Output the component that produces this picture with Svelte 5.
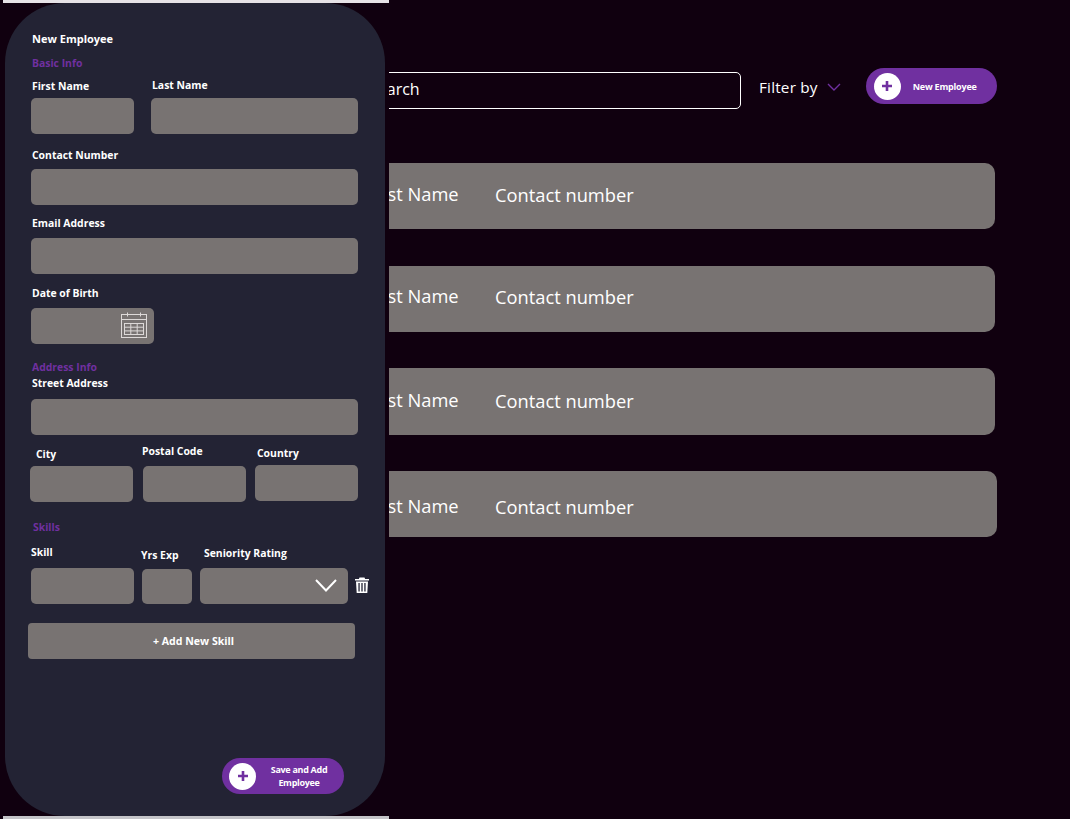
<script lang="ts">
	// top/bottom pad nudges the text inside each row
	const rows = [
		{ top: 59, height: 66, padTop: 0, padBottom: 4 },
		{ top: 37, height: 66, padTop: 0, padBottom: 6 },
		{ top: 36, height: 67, padTop: 0, padBottom: 2 },
		{ top: 36, height: 66, padTop: 4, padBottom: 0 }
	];
</script>

{#snippet plusIcon()}
	<span class="plus-disc">
		<svg viewBox="0 0 12 12" width="12" height="12" aria-hidden="true">
			<path d="M6 1v10M1 6h10" stroke="#7030a0" stroke-width="2.6" />
		</svg>
	</span>
{/snippet}

<div class="page">
	<main class="main">
		<div class="toolbar">
			<input class="search" placeholder="Search" />
			<span class="filter">Filter by</span>
			<svg class="filter-chevron" viewBox="0 0 14 8" width="14" height="8" aria-hidden="true">
				<path d="M1 1l6 6 6-6" fill="none" stroke="#7030a0" stroke-width="1.4" />
			</svg>
			<button class="pill new-btn">
				{@render plusIcon()}
				<span class="new-text">New Employee</span>
			</button>
		</div>

		{#each rows as row, i}
			<div
				class="row"
				class:row-last={i === 3}
				style="margin-top: {row.top}px; height: {row.height}px; padding-top: {row.padTop}px; padding-bottom: {row.padBottom}px"
			>
				<span class="cell-name">First Name</span>
				<span class="cell-contact">Contact number</span>
			</div>
		{/each}
	</main>

	<div class="overlay">
		<form class="panel">
			<h1 class="title">New Employee</h1>
			<h2 class="section">Basic Info</h2>
			<div class="fields basic">
				<label class="field w103">
					<span class="lbl">First Name</span>
					<input />
				</label>
				<label class="field w207 raised">
					<span class="lbl">Last Name</span>
					<input />
				</label>
			</div>

			<label class="field contact">
				<span class="lbl">Contact Number</span>
				<input />
			</label>
			<label class="field email">
				<span class="lbl">Email Address</span>
				<input />
			</label>
			<label class="field dob">
				<span class="lbl">Date of Birth</span>
				<span class="date-wrap">
					<input />
					<svg class="cal" viewBox="0 0 26 26" width="26" height="26" aria-hidden="true">
						<g fill="none" stroke="#ddd9d8" stroke-width="1">
							<rect x="0.5" y="2.5" width="25" height="23" />
							<path d="M0.5 7.5h25M6.5 0.5v4M19.5 0.5v4" />
							<rect x="3.5" y="11.5" width="19" height="11" />
							<path d="M3.5 15.2h19M3.5 18.9h19M9.8 11.5v11M16.2 11.5v11" />
						</g>
					</svg>
				</span>
			</label>

			<h2 class="section address">Address Info</h2>
			<label class="field street">
				<span class="lbl">Street Address</span>
				<input />
			</label>

			<div class="fields place">
				<label class="field w103 city">
					<span class="lbl">City</span>
					<input />
				</label>
				<label class="field w103 postal">
					<span class="lbl">Postal Code</span>
					<input />
				</label>
				<label class="field w103 country">
					<span class="lbl">Country</span>
					<input />
				</label>
			</div>

			<h2 class="section skills">Skills</h2>
			<div class="fields skill-row">
				<label class="field w103">
					<span class="lbl">Skill</span>
					<input />
				</label>
				<label class="field w50 yrs">
					<span class="lbl">Yrs Exp</span>
					<input />
				</label>
				<label class="field w148 rating">
					<span class="lbl">Seniority Rating</span>
					<span class="select-wrap">
						<input />
						<svg class="chev" viewBox="0 0 22 13" width="22" height="13" aria-hidden="true">
							<path d="M1 1l10 10.500L21 1" fill="none" stroke="#fff" stroke-width="2" />
						</svg>
					</span>
				</label>
				<svg class="trash" viewBox="0 0 16 16" width="16" height="16" aria-hidden="true">
					<path
						fill="#fff"
						d="M5.500 0.500h5l0.600 1.500H15v1.500H1V2h3.900zM2 4.500h12l-0.700 11.500H2.700zM4.400 6v8.500h1.300V6zM7.350 6v8.500h1.300V6zM10.300 6v8.500h1.300V6z"
					/>
				</svg>
			</div>

			<button type="button" class="add-skill">+ Add New Skill</button>

			<div class="actions">
				<button type="button" class="pill save-btn">
					{@render plusIcon()}
					<span class="save-text">Save and Add Employee</span>
				</button>
			</div>
		</form>
	</div>
</div>

<style>
	:global(body) {
		margin: 0;
		background: #10000f;
	}

	.page {
		position: relative;
		width: 1070px;
		height: 819px;
		overflow: hidden;
		background: #10000f;
		font-family: "Open Sans", "Liberation Sans", sans-serif;
		color: #fff;
	}

	/* ===== list behind the form ===== */
	.main {
		box-sizing: border-box;
		width: 995px;
		padding: 68px 0 0 260px;
	}

	.toolbar {
		display: flex;
		align-items: center;
		height: 36px;
		width: 737px;
	}

	.search {
		flex: none;
		box-sizing: border-box;
		width: 481px;
		height: 37px;
		margin-top: 9px;
		padding: 0 0 3px 108px;
		background: transparent;
		border: 1px solid #fff;
		border-radius: 5px;
		color: #fff;
		font: 16px "Open Sans", sans-serif;
	}

	.search::placeholder {
		color: #fff;
		opacity: 1;
	}

	.filter {
		margin: 2px 0 0 18px;
		font-size: 15.3px;
		letter-spacing: 0.2px;
	}

	.filter-chevron {
		flex: none;
		margin: 2px 0 0 9px;
	}

	.pill {
		display: flex;
		align-items: center;
		box-sizing: border-box;
		height: 36px;
		padding: 0 0 0 8px;
		border: none;
		border-radius: 18px;
		background: #7030a0;
		color: #fff;
		font-family: inherit;
	}

	.new-btn {
		flex: none;
		width: 131px;
		margin-left: 25px;
	}

	.plus-disc {
		display: flex;
		flex: none;
		align-items: center;
		justify-content: center;
		width: 27px;
		height: 27px;
		border-radius: 50%;
		background: #fff;
	}

	.new-text {
		margin-left: 12px;
		font-size: 9px;
		font-weight: 700;
		letter-spacing: -0.2px;
		white-space: nowrap;
	}

	.row {
		display: flex;
		align-items: center;
		box-sizing: border-box;
		padding-left: 106px;
		background: #787372;
		border-radius: 10px;
		font-size: 18.3px;
	}

	.row-last {
		width: 737px;
	}

	.cell-name {
		width: 129px;
		margin-bottom: 2px;
	}

	/* ===== modal form ===== */
	.overlay {
		position: absolute;
		top: 0;
		left: 0;
		box-sizing: border-box;
		width: 389px;
		height: 819px;
		padding: 3px 4px 3px 5px;
		background: #10000f;
	}

	.overlay::before,
	.overlay::after {
		content: "";
		position: absolute;
		left: 3px;
		right: 0;
		height: 3px;
	}

	.overlay::before {
		top: 0;
		background: #e6e2e6;
	}

	.overlay::after {
		bottom: 0;
		background: #c4c4c8;
	}

	.panel {
		box-sizing: border-box;
		height: 100%;
		padding: 28px 27px 0 26px;
		background: #232334;
		border-radius: 60px;
	}

	.title {
		margin: 0 0 0 1px;
		font-size: 11px;
		line-height: 15px;
		font-weight: 700;
	}

	.section {
		margin: 10px 0 0 1px;
		color: #7030a0;
		font-size: 10.4px;
		line-height: 15px;
		font-weight: 700;
	}

	.field {
		display: flex;
		flex: none;
		flex-direction: column;
	}

	.lbl {
		margin-left: 1px;
		font-size: 10.4px;
		line-height: 15px;
		font-weight: 700;
		white-space: nowrap;
	}

	input {
		box-sizing: border-box;
		width: 100%;
		height: 36px;
		border: none;
		border-radius: 5px;
		background: #787372;
	}

	.fields {
		display: flex;
		align-items: flex-end;
	}

	.basic {
		gap: 17px;
		margin-top: 7px;
	}

	.basic .lbl {
		margin-bottom: 4px;
	}

	.basic .raised .lbl {
		margin-bottom: 5px;
	}

	.w103 {
		width: 103px;
	}

	.w207 {
		width: 207px;
	}

	.w50 {
		width: 50px;
	}

	.w148 {
		width: 148px;
	}

	.contact {
		margin-top: 14px;
	}

	.contact .lbl {
		margin-bottom: 6px;
	}

	.email {
		margin-top: 11px;
	}

	.email .lbl {
		margin-bottom: 7px;
	}

	.contact input,
	.email input,
	.street input {
		width: 327px;
	}

	.dob {
		margin-top: 12px;
		width: 123px;
	}

	.dob .lbl {
		margin-bottom: 7px;
	}

	.date-wrap,
	.select-wrap {
		position: relative;
		display: block;
	}

	.cal {
		position: absolute;
		top: 4px;
		right: 7px;
	}

	.section.address {
		margin-top: 16px;
	}

	.street {
		margin-top: 1px;
	}

	.street .lbl {
		margin-bottom: 8px;
	}

	.place {
		margin: 9px 0 0 -1px;
	}

	.city .lbl {
		margin: 0 0 4px 6px;
	}

	.postal {
		margin-left: 10px;
	}

	.postal .lbl {
		margin: 0 0 7px -1px;
	}

	.country {
		margin: 0 0 1px 9px;
	}

	.country .lbl {
		margin: 0 0 4px 2px;
	}

	.section.skills {
		margin: 18px 0 0 2px;
	}

	.skill-row {
		margin-top: 10px;
	}

	.skill-row .lbl {
		margin: 0 0 8px;
	}

	.skill-row .yrs {
		margin-left: 8px;
	}

	.skill-row .yrs .lbl {
		margin: 0 0 6px -1px;
	}

	.yrs input {
		height: 35px;
	}

	.rating {
		margin-left: 8px;
	}

	.skill-row .rating .lbl {
		margin: 0 0 7px 4px;
	}

	.chev {
		position: absolute;
		top: 11px;
		right: 11px;
	}

	.trash {
		flex: none;
		margin: 0 0 11px 6px;
	}

	.add-skill {
		display: block;
		box-sizing: border-box;
		width: 327px;
		height: 36px;
		margin: 19px 0 0 -3px;
		padding: 0 0 0 4px;
		border: none;
		border-radius: 4px;
		background: #787372;
		color: #fff;
		font-family: inherit;
		font-size: 10.6px;
		font-weight: 700;
	}

	.actions {
		display: flex;
		justify-content: flex-end;
		margin: 99px 14px 0 0;
	}

	.save-btn {
		width: 122px;
		padding-left: 7px;
	}

	.save-text {
		width: 70px;
		margin-left: 8px;
		font-size: 9px;
		line-height: 13px;
		font-weight: 700;
		letter-spacing: -0.3px;
		text-align: center;
	}
</style>
